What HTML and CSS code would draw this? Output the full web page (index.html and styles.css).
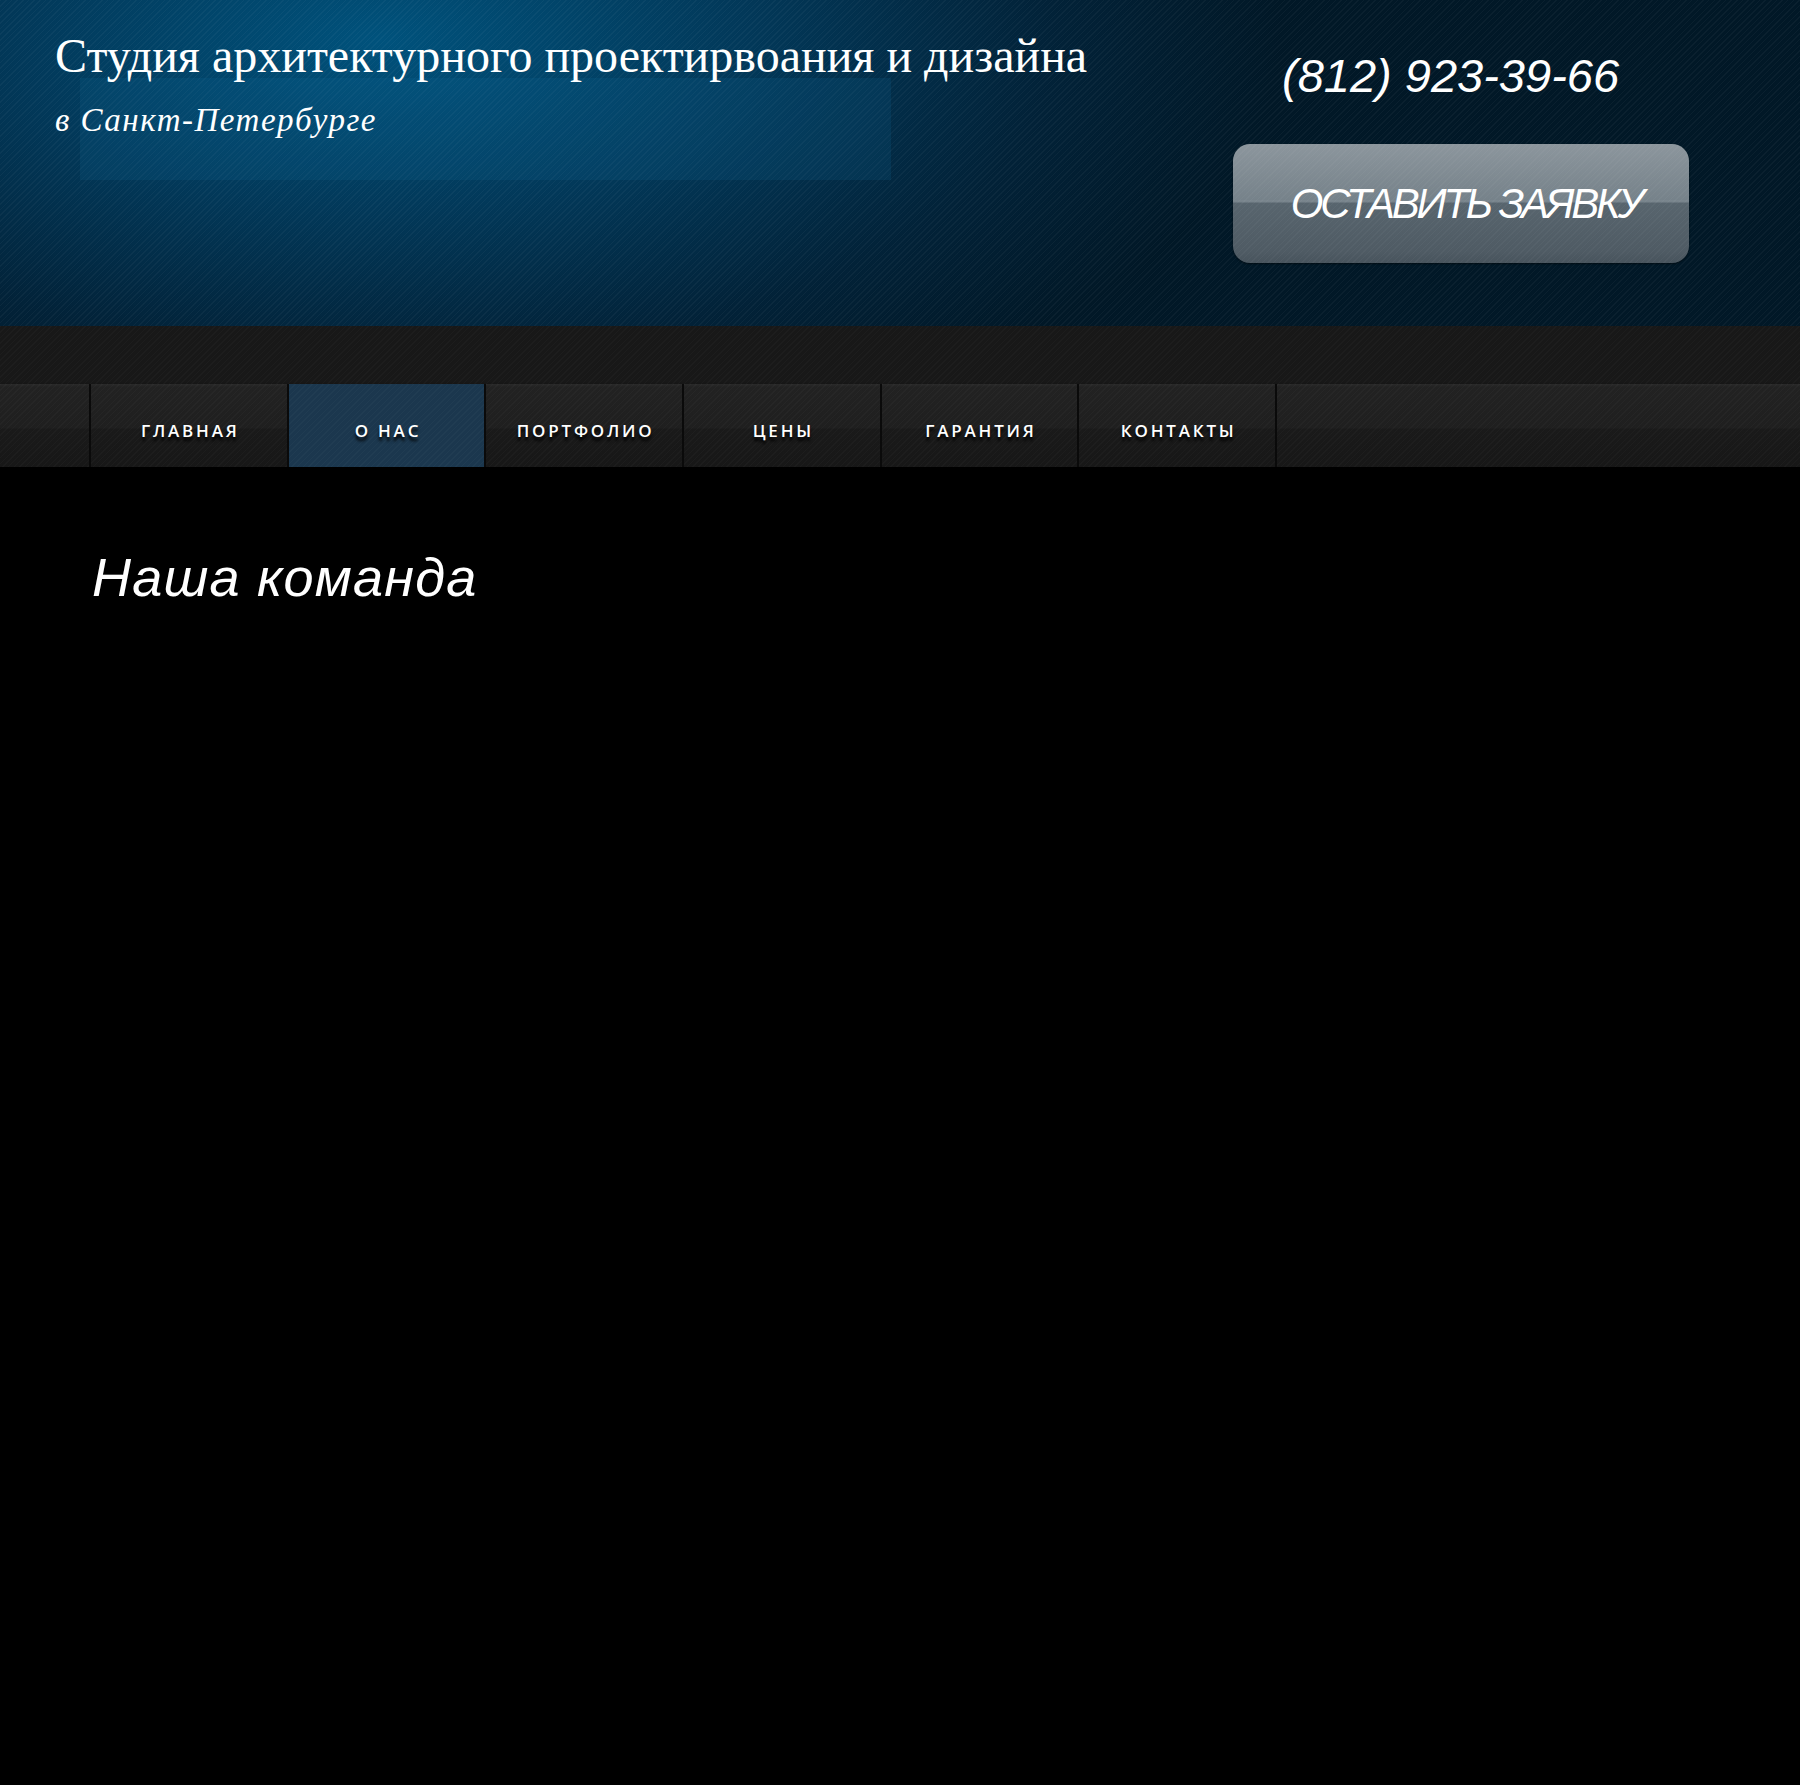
FILE: index.html
```html
<!DOCTYPE html>
<html lang="ru">
<head>
<meta charset="utf-8">
<title>Студия архитектурного проектирования</title>
<link rel="stylesheet" href="styles.css">
</head>
<body>
<header class="header">
  <div class="header-box"></div>
  <div class="brand">
    <div class="brand-title">Студия архитектурного проектирвоания и дизайна</div>
    <div class="brand-sub">в Санкт-Петербурге</div>
  </div>
  <div class="contact">
    <div class="phone">(812) 923-39-66</div>
    <a class="cta" href="#">ОСТАВИТЬ ЗАЯВКУ</a>
  </div>
</header>
<div class="strip"></div>
<nav class="nav">
  <a class="nav-item" href="#">ГЛАВНАЯ</a>
  <a class="nav-item active" href="#">О НАС</a>
  <a class="nav-item" href="#">ПОРТФОЛИО</a>
  <a class="nav-item" href="#">ЦЕНЫ</a>
  <a class="nav-item" href="#">ГАРАНТИЯ</a>
  <a class="nav-item last" href="#">КОНТАКТЫ</a>
</nav>
<main class="main">
  <h1 class="page-title">Наша команда</h1>
</main>
</body>
</html>
```
FILE: styles.css
```css
html, body {
  margin: 0;
  padding: 0;
  background: #000;
}
body {
  width: 1800px;
  min-height: 1785px;
  font-family: "Liberation Sans", Arial, sans-serif;
  color: #fff;
}
a { text-decoration: none; color: #fff; }

.header {
  position: relative;
  height: 326px;
  display: flex;
  background:
    repeating-linear-gradient(135deg, rgba(255,255,255,0.035) 0 1px, rgba(0,0,0,0) 1px 4px),
    radial-gradient(ellipse 900px 420px at 380px 40px, #00527c 0%, #02395a 40%, #022238 75%, #011827 100%),
    #011827;
  overflow: hidden;
}
.header-box {
  position: absolute;
  left: 80px;
  top: 78px;
  width: 811px;
  height: 102px;
  background: rgba(20, 110, 160, 0.16);
}
.brand {
  position: relative;
  width: 1233px;
  flex: none;
  padding-left: 55px;
  padding-top: 32px;
  box-sizing: border-box;
  font-family: "Liberation Serif", "Times New Roman", serif;
}
.brand-title {
  font-size: 48px;
  line-height: 1;
  white-space: nowrap;
}
.brand-sub {
  font-size: 33px;
  font-style: italic;
  line-height: 1;
  letter-spacing: 1.5px;
  margin-top: 24px;
}
.contact {
  position: relative;
  padding-top: 52px;
  display: flex;
  flex-direction: column;
  align-items: flex-start;
}
.phone {
  font-size: 47px;
  font-style: italic;
  line-height: 1;
  margin-left: 49px;
}
.cta {
  margin-top: 45px;
  width: 456px;
  height: 119px;
  border-radius: 17px;
  display: flex;
  align-items: center;
  justify-content: center;
  font-size: 42px;
  font-style: italic;
  letter-spacing: -3.2px;
  padding-left: 10px;
  box-sizing: border-box;
  background:
    repeating-linear-gradient(135deg, rgba(255,255,255,0.03) 0 1px, rgba(0,0,0,0) 1px 4px),
    linear-gradient(to bottom, #8c969d 0%, #76828a 47%, #7e8a92 48%, #58656e 50%, #4f5b64 90%, #48545d 100%);
  box-shadow: 0 1px 2px rgba(0,0,0,0.5);
}

.strip {
  height: 58px;
  background:
    repeating-linear-gradient(135deg, rgba(255,255,255,0.025) 0 1px, rgba(0,0,0,0) 1px 4px),
    #181818;
}

.nav {
  height: 83px;
  display: flex;
  padding-left: 89px;
  background:
    repeating-linear-gradient(135deg, rgba(255,255,255,0.025) 0 1px, rgba(0,0,0,0) 1px 4px),
    linear-gradient(to bottom, #2a2a2a 0px, #222 3px, #1f1f1f 44px, #1a1a1a 45px, #171717 100%);
  box-shadow: 0 2px 3px rgba(0,0,0,0.9);
  position: relative;
}
.nav-item {
  width: 195.7px;
  border-left: 2px solid #0a0a0a;
  display: flex;
  justify-content: center;
  padding-top: 37px;
  box-sizing: content-box;
  font-family: "Open Sans", sans-serif;
  font-weight: 600;
  font-size: 17px;
  line-height: 20px;
  letter-spacing: 2.8px;
  text-indent: 2.8px;
  text-shadow: 0 4px 3px rgba(0,0,0,0.95);
}
.nav-item.last {
  border-right: 2px solid #0a0a0a;
}
.nav-item.active {
  background:
    repeating-linear-gradient(135deg, rgba(255,255,255,0.025) 0 1px, rgba(0,0,0,0) 1px 4px),
    #1b374e;
}

.main {
  padding: 83px 92px 0;
}
.page-title {
  margin: 0;
  font-size: 54px;
  font-weight: normal;
  font-style: italic;
  line-height: 1;
  letter-spacing: 1.2px;
}
```
